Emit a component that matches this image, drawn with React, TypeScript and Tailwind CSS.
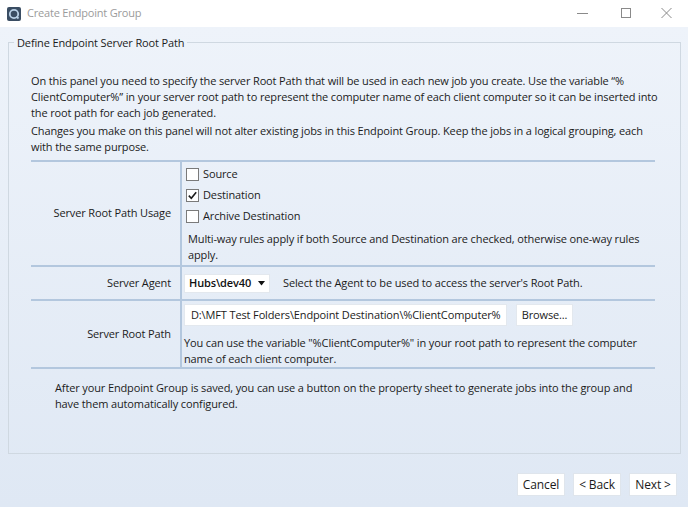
import React from "react";

const FONT = { fontFamily: '"Open Sans", "Noto Sans", sans-serif' };

function Check({ checked, label }: { checked?: boolean; label: string }) {
  return (
    <div className="flex h-[21px] items-center ml-[2px]">
      <div className="w-[13px] h-[13px] bg-white border border-[#7a7a7a] flex items-center justify-center">
        {checked && (
          <svg width="11" height="11" viewBox="0 0 11 11">
            <path d="M1.8 5.6 L4.3 8.2 L9.2 2.2" fill="none" stroke="#1a1a1a" strokeWidth="1.6" />
          </svg>
        )}
      </div>
      <span className="ml-[4px]">{label}</span>
    </div>
  );
}

function Btn({ children }: { children: React.ReactNode }) {
  return (
    <div className="w-[48px] h-[23px] bg-white border border-[#dfe5ec] flex items-center justify-center text-[12px] text-[#1a1a1a]">
      {children}
    </div>
  );
}

export default function App() {
  return (
    <div
      className="w-[688px] h-[507px] flex flex-col text-[11px] tracking-[-0.13px] text-[#1b1b1b] overflow-hidden"
      style={FONT}
    >
      {/* Title bar */}
      <div className="h-[27px] bg-white flex items-center shrink-0">
        <svg className="ml-[7px]" width="14" height="14" viewBox="0 0 14 14">
          <rect x="0" y="0" width="14" height="14" rx="2" fill="#3a4d63" />
          <circle cx="7" cy="7" r="4.2" fill="none" stroke="#b9d0e6" strokeWidth="1.8" />
          <path d="M9.5 9.5 L11.5 11.5" stroke="#b9d0e6" strokeWidth="1.8" />
        </svg>
        <span className="ml-[6px] text-[11px] tracking-[-0.2px] text-[#9b9b9b]">Create Endpoint Group</span>
        <div className="ml-auto flex items-center">
          <svg width="46" height="27" viewBox="0 0 46 27">
            <path d="M17 13.5 H28" stroke="#8a8a8a" strokeWidth="1" />
          </svg>
          <svg width="40" height="27" viewBox="0 0 40 27">
            <rect x="15.5" y="8.5" width="9" height="9" fill="none" stroke="#8a8a8a" strokeWidth="1" />
          </svg>
          <svg width="42" height="27" viewBox="0 0 42 27">
            <path d="M15.5 8 L25.5 18 M25.5 8 L15.5 18" stroke="#8a8a8a" strokeWidth="1" />
          </svg>
        </div>
      </div>

      {/* Body */}
      <div className="flex-1 flex flex-col bg-gradient-to-b from-[#eef3fa] to-[#dfe8f4]">
        <fieldset className="ml-[8px] mr-[10px] mt-[8px] h-[419px] border border-[#cfd8e1]">
          <legend className="ml-[5px] px-[3px] text-[11px] leading-[15px]">Define Endpoint Server Root Path</legend>
          <div className="pl-[22px] pr-[22px]">
            <div className="mt-[23px] leading-[16px]">
              <p className="whitespace-nowrap">
                On this panel you need to specify the server Root Path that will be used in each new job you create. Use the variable “%
                <br />
                ClientComputer%” in your server root path to represent the computer name of each client computer so it can be inserted into
                <br />
                the root path for each job generated.
              </p>
              <p className="mt-[2px] whitespace-nowrap">
                Changes you make on this panel will not alter existing jobs in this Endpoint Group. Keep the jobs in a logical grouping, each
                <br />
                with the same purpose.
              </p>
            </div>

            {/* Table */}
            <div className="mt-[5px] w-[624px] border-t-2 border-[#b3c7de]">
              {/* Row 1 */}
              <div className="flex border-b-2 border-[#b3c7de]">
                <div className="w-[149px] shrink-0 flex items-center justify-end pr-[9px]">Server Root Path Usage</div>
                <div className="flex-1 border-l-2 border-[#b3c7de] pl-[2px] pt-[2px] pb-[2px]">
                  <Check label="Source" />
                  <Check checked label="Destination" />
                  <Check label="Archive Destination" />
                  <p className="ml-[4px] mt-[4px] leading-[16px] whitespace-nowrap">
                    Multi-way rules apply if both Source and Destination are checked, otherwise one-way rules
                    <br />
                    apply.
                  </p>
                </div>
              </div>
              {/* Row 2 */}
              <div className="flex h-[34px] border-b-2 border-[#b3c7de]">
                <div className="w-[149px] shrink-0 flex items-center justify-end pr-[9px]">Server Agent</div>
                <div className="flex-1 border-l-2 border-[#b3c7de] pl-[2px] flex items-center">
                  <div className="w-[86px] h-[19px] bg-white border border-[#e3e8ee] flex items-center pl-[4px] pr-[4px] font-semibold text-[#111]">
                    <span>Hubs\dev40</span>
                    <svg className="ml-auto" width="7" height="5" viewBox="0 0 7 5">
                      <path d="M0 0 H7 L3.5 4.5 Z" fill="#111" />
                    </svg>
                  </div>
                  <span className="ml-[13px]">Select the Agent to be used to access the server's Root Path.</span>
                </div>
              </div>
              {/* Row 3 */}
              <div className="flex border-b-2 border-[#b3c7de]">
                <div className="w-[149px] shrink-0 flex items-center justify-end pr-[9px]">Server Root Path</div>
                <div className="flex-1 border-l-2 border-[#b3c7de] pl-[2px] pt-[3px]">
                  <div className="flex items-center">
                    <div className="w-[323px] h-[22px] bg-white border border-[#e3e8ee] flex items-center pl-[6px] whitespace-nowrap overflow-hidden">
                      D:\MFT Test Folders\Endpoint Destination\%ClientComputer%
                    </div>
                    <div className="ml-[9px] w-[57px] h-[22px] bg-white border border-[#e3e8ee] flex items-center justify-center">
                      Browse...
                    </div>
                  </div>
                  <p className="mt-[9px] leading-[16px] whitespace-nowrap">
                    You can use the variable "%ClientComputer%" in your root path to represent the computer
                    <br />
                    name of each client computer.
                  </p>
                </div>
              </div>
            </div>

            <p className="mt-[11px] ml-[24px] leading-[16px] whitespace-nowrap">
              After your Endpoint Group is saved, you can use a button on the property sheet to generate jobs into the group and
              <br />
              have them automatically configured.
            </p>
          </div>
        </fieldset>

        <div className="mt-[19px] flex justify-end gap-[8px] pr-[11px]">
          <Btn>Cancel</Btn>
          <Btn>&lt; Back</Btn>
          <Btn>Next &gt;</Btn>
        </div>
      </div>
    </div>
  );
}
